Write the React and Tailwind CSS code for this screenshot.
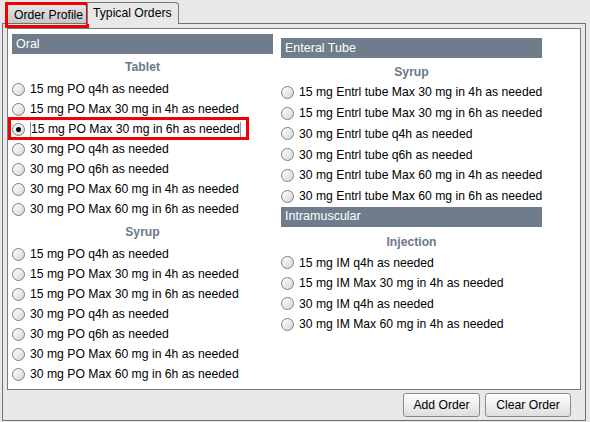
import React from "react";

const tablet = [
    "15 mg PO q4h as needed",
    "15 mg PO Max 30 mg in 4h as needed",
    "15 mg PO Max 30 mg in 6h as needed",
    "30 mg PO q4h as needed",
    "30 mg PO q6h as needed",
    "30 mg PO Max 60 mg in 4h as needed",
    "30 mg PO Max 60 mg in 6h as needed",
];

const syrup = [...tablet];

const entral = [
    "15 mg Entrl tube Max 30 mg in 4h as needed",
    "15 mg Entrl tube Max 30 mg in 6h as needed",
    "30 mg Entrl tube q4h as needed",
    "30 mg Entrl tube q6h as needed",
    "30 mg Entrl tube Max 60 mg in 4h as needed",
    "30 mg Entrl tube Max 60 mg in 6h as needed",
];

const injection = [
    "15 mg IM q4h as needed",
    "15 mg IM Max 30 mg in 4h as needed",
    "30 mg IM q4h as needed",
    "30 mg IM Max 60 mg in 4h as needed",
];

const Radio = ({checked}) => (
    <span
        className="w-[13px] h-[13px] rounded-full border border-[#7d7d7d] bg-gradient-to-br from-white to-[#d6d6d6] flex items-center justify-center shrink-0">
        {checked && <span className="w-[5px] h-[5px] rounded-full bg-black"/>}
    </span>
);

const Row = ({label, checked, h = "h-[20px]", highlight}) => (
    <div className={`relative flex items-center gap-[5px] whitespace-nowrap ${h}`}>
        <Radio checked={checked}/>
        <span className={highlight ? "border-x border-[#8a96b0] leading-[15px]" : ""}>{label}</span>
        {highlight && (
            <div className="absolute -left-[4px] -top-[2px] w-[241px] h-[23px] border-[3px] border-[#f00000]"/>
        )}
    </div>
);

const Bar = ({children}) => (
    <div className="h-[20px] bg-[#6e7c8b] text-white text-[12.5px] pl-[4px] flex items-center">{children}</div>
);

const Heading = ({children, pt = "pt-[2px]", h = "h-[25px]"}) => (
    <div className={`${h} ${pt} flex items-center justify-center font-bold text-[#6b7888]`}>{children}</div>
);

export default function App() {
    return (
        <div
            className="w-[590px] h-[422px] bg-[#e8e8e8] pt-[2px] pl-[2px] pr-[4px] text-black text-[12.2px] font-['Liberation_Sans',Arial,sans-serif]">
            <div className="flex items-end h-[21px] pl-[4px]">
                <div
                    className="relative w-[81px] h-[19px] border border-b-0 border-[#7a7a7a] rounded-t-[3px] bg-gradient-to-b from-[#e6e6e6] to-[#c6c6c6] flex items-center pl-[7px] pt-[2px]">
                    Order Profile
                    <div className="absolute -left-[2px] -top-[3px] w-[84px] h-[26px] border-[3px] border-[#f00000]"/>
                </div>
                <div
                    className="relative z-10 -mb-px w-[92px] h-[22px] border border-b-0 border-[#7a7a7a] rounded-tr-[4px] bg-[#e8e8e8] flex items-center pl-[5px] pb-[1px]">
                    Typical Orders
                </div>
            </div>

            <div className="h-[398px] border border-[#707070] px-[4px] pt-[4px] flex flex-col">
                <div className="h-[362px] border border-[#7a7a7a] bg-white flex gap-[8px] pl-[4px] pt-[5px]">
                    <div className="w-[261px] shrink-0">
                        <Bar>Oral</Bar>
                        <Heading>Tablet</Heading>
                        {tablet.map((t, i) => (
                            <Row key={t} label={t} checked={i === 2} highlight={i === 2}/>
                        ))}
                        <Heading>Syrup</Heading>
                        {syrup.map((t) => (
                            <Row key={t} label={t}/>
                        ))}
                    </div>
                    <div className="w-[261px] shrink-0 pt-[4px]">
                        <Bar>Enteral Tube</Bar>
                        <Heading h="h-[24px]" pt="pt-[4px]">Syrup</Heading>
                        {entral.map((t) => (
                            <Row key={t} label={t} h="h-[20.8px]"/>
                        ))}
                        <Bar>Intramuscular</Bar>
                        <Heading h="h-[26px]" pt="pt-[5px]">Injection</Heading>
                        {injection.map((t) => (
                            <Row key={t} label={t} h="h-[20.4px]"/>
                        ))}
                    </div>
                </div>

                <div className="flex justify-end gap-[5px] pt-[3px] pr-[10px]">
                    <button type="button"
                            className="w-[77px] h-[24px] rounded-[3px] border border-[#8a8a8a] bg-gradient-to-b from-white to-[#dedede]">
                        Add Order
                    </button>
                    <button type="button"
                            className="w-[86px] h-[24px] rounded-[3px] border border-[#8a8a8a] bg-gradient-to-b from-white to-[#dedede]">
                        Clear Order
                    </button>
                </div>
            </div>
        </div>
    );
}
